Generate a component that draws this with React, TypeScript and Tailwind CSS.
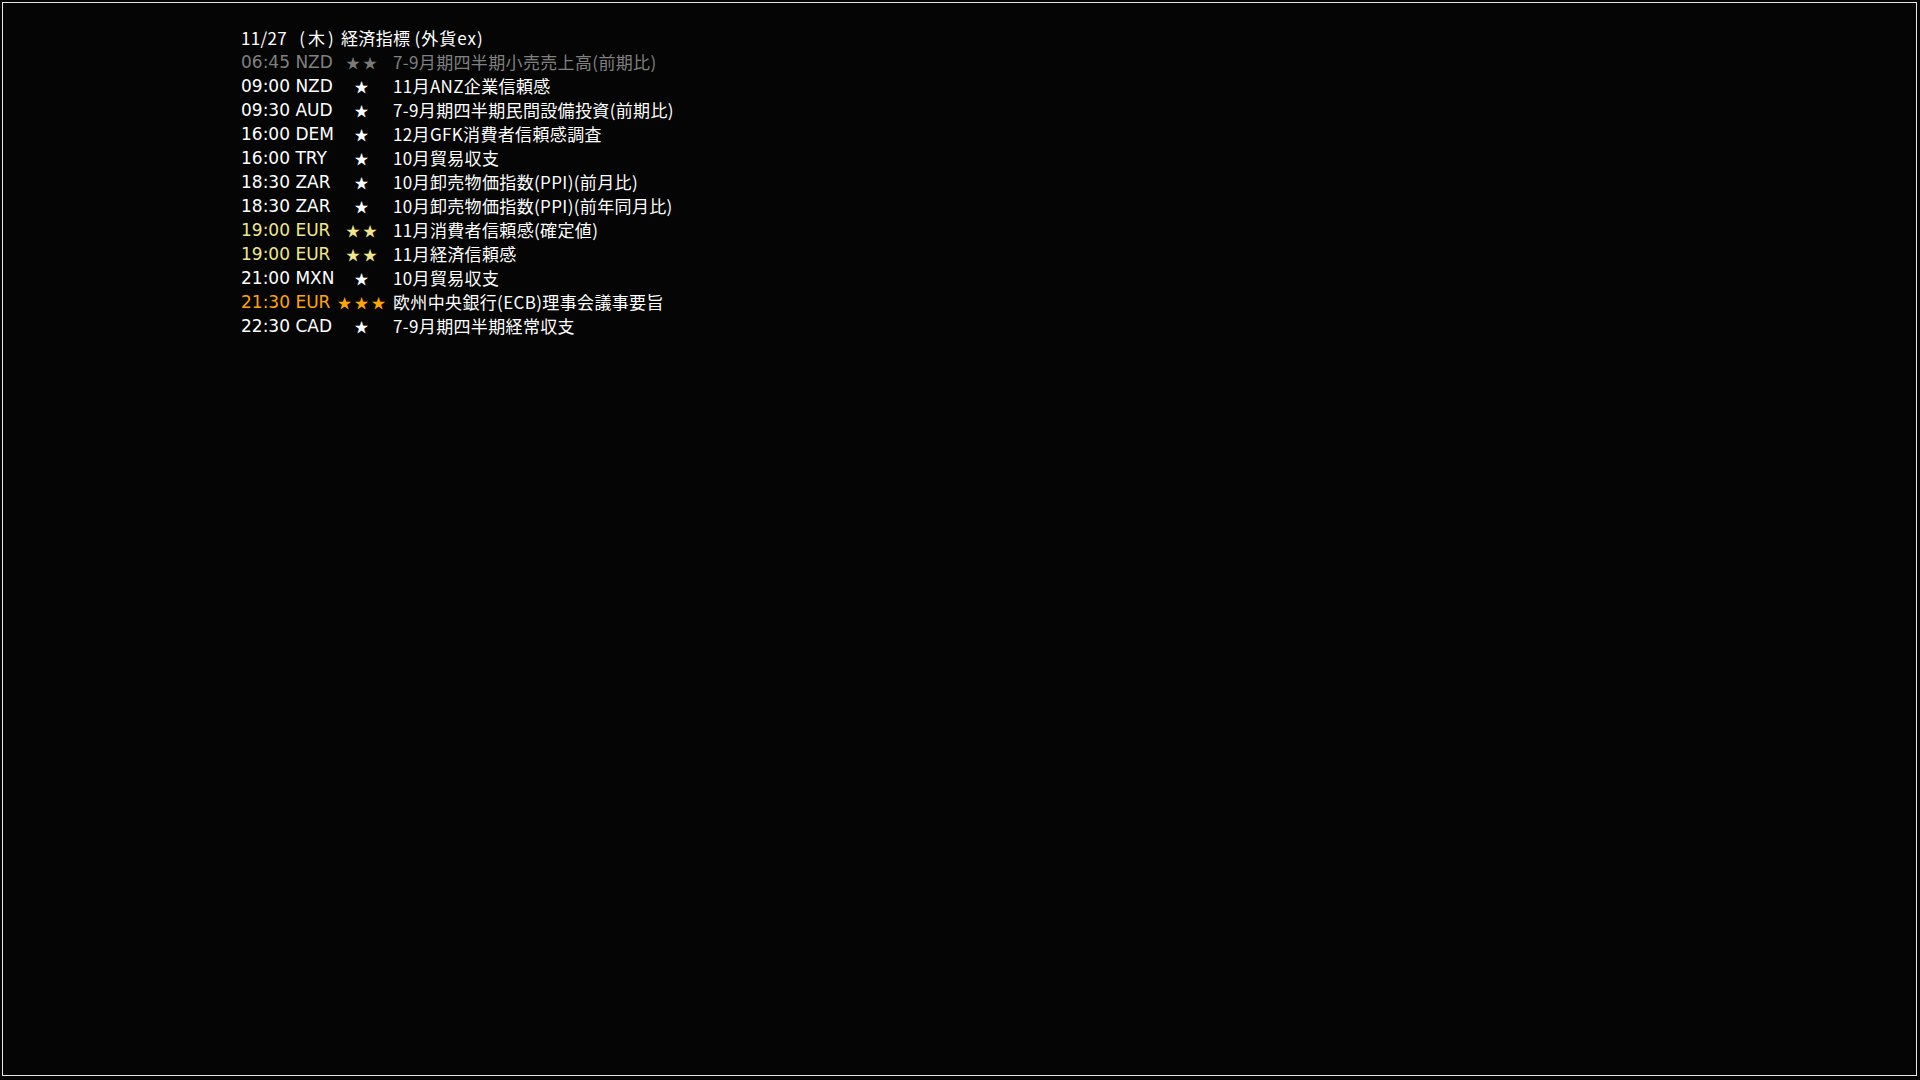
type Row = {
    time: string;
    currency: string;
    stars: number;
    title: string;
    tone: 'done' | 'normal' | 'mid' | 'high';
};

const rows: Row[] = [
    { time: '06:45', currency: 'NZD', stars: 2, title: '7-9月期四半期小売売上高(前期比)', tone: 'done' },
    { time: '09:00', currency: 'NZD', stars: 1, title: '11月ANZ企業信頼感', tone: 'normal' },
    { time: '09:30', currency: 'AUD', stars: 1, title: '7-9月期四半期民間設備投資(前期比)', tone: 'normal' },
    { time: '16:00', currency: 'DEM', stars: 1, title: '12月GFK消費者信頼感調査', tone: 'normal' },
    { time: '16:00', currency: 'TRY', stars: 1, title: '10月貿易収支', tone: 'normal' },
    { time: '18:30', currency: 'ZAR', stars: 1, title: '10月卸売物価指数(PPI)(前月比)', tone: 'normal' },
    { time: '18:30', currency: 'ZAR', stars: 1, title: '10月卸売物価指数(PPI)(前年同月比)', tone: 'normal' },
    { time: '19:00', currency: 'EUR', stars: 2, title: '11月消費者信頼感(確定値)', tone: 'mid' },
    { time: '19:00', currency: 'EUR', stars: 2, title: '11月経済信頼感', tone: 'mid' },
    { time: '21:00', currency: 'MXN', stars: 1, title: '10月貿易収支', tone: 'normal' },
    { time: '21:30', currency: 'EUR', stars: 3, title: '欧州中央銀行(ECB)理事会議事要旨', tone: 'high' },
    { time: '22:30', currency: 'CAD', stars: 1, title: '7-9月期四半期経常収支', tone: 'normal' },
];

const timeColor = {
    done: 'text-[#808080]',
    normal: 'text-white',
    mid: 'text-[#f0e68c]',
    high: 'text-[#ffa500]',
};

const starColor = {
    done: 'text-[#7a7a7a]',
    normal: 'text-white',
    mid: 'text-[#f0e68c]',
    high: 'text-[#ffa500]',
};

const jp = { fontFamily: '"MS UI Gothic", "Noto Sans CJK JP", sans-serif' };
const latin = { fontFamily: '"DejaVu Sans", "Noto Sans CJK JP", sans-serif' };

function Stars({ count, tone }: { count: number; tone: Row['tone'] }) {
    return (
        <div className={`flex w-[51px] justify-center ${starColor[tone]}`} style={jp}>
            {Array.from({ length: count }).map((_, i) => (
                <span key={i} className="flex w-[17px] justify-center text-[14px]">
                    ★
                </span>
            ))}
        </div>
    );
}

export default function App() {
    return (
        <div className="h-[1080px] w-[1920px] overflow-hidden bg-[#050505] pl-[2px] pt-[2px]">
            <div className="h-[1074px] w-[1915px] border border-[#e6e6e6] pl-[238px] pt-[23px] text-[17px] leading-[24px] text-white">
                <div className="whitespace-nowrap tracking-[0.35px]" style={jp}>
                    <span>11/27</span> <span className="ml-[8px] tracking-[3px]">(木)</span>{' '}
                    <span>経済指標</span> <span className="tracking-[1px]">(外貨ex)</span>
                </div>
                {rows.map((row, i) => (
                    <div key={i} className="flex items-center">
                        <span className={`w-[95px] whitespace-nowrap ${timeColor[row.tone]}`} style={latin}>
                            {row.time} {row.currency}
                        </span>
                        <Stars count={row.stars} tone={row.tone} />
                        <span
                            className={`ml-[6px] whitespace-nowrap tracking-[0.35px] ${
                                row.tone === 'done' ? 'text-[#808080]' : 'text-white'
                            }`}
                            style={jp}
                        >
                            {row.title}
                        </span>
                    </div>
                ))}
            </div>
        </div>
    );
}
